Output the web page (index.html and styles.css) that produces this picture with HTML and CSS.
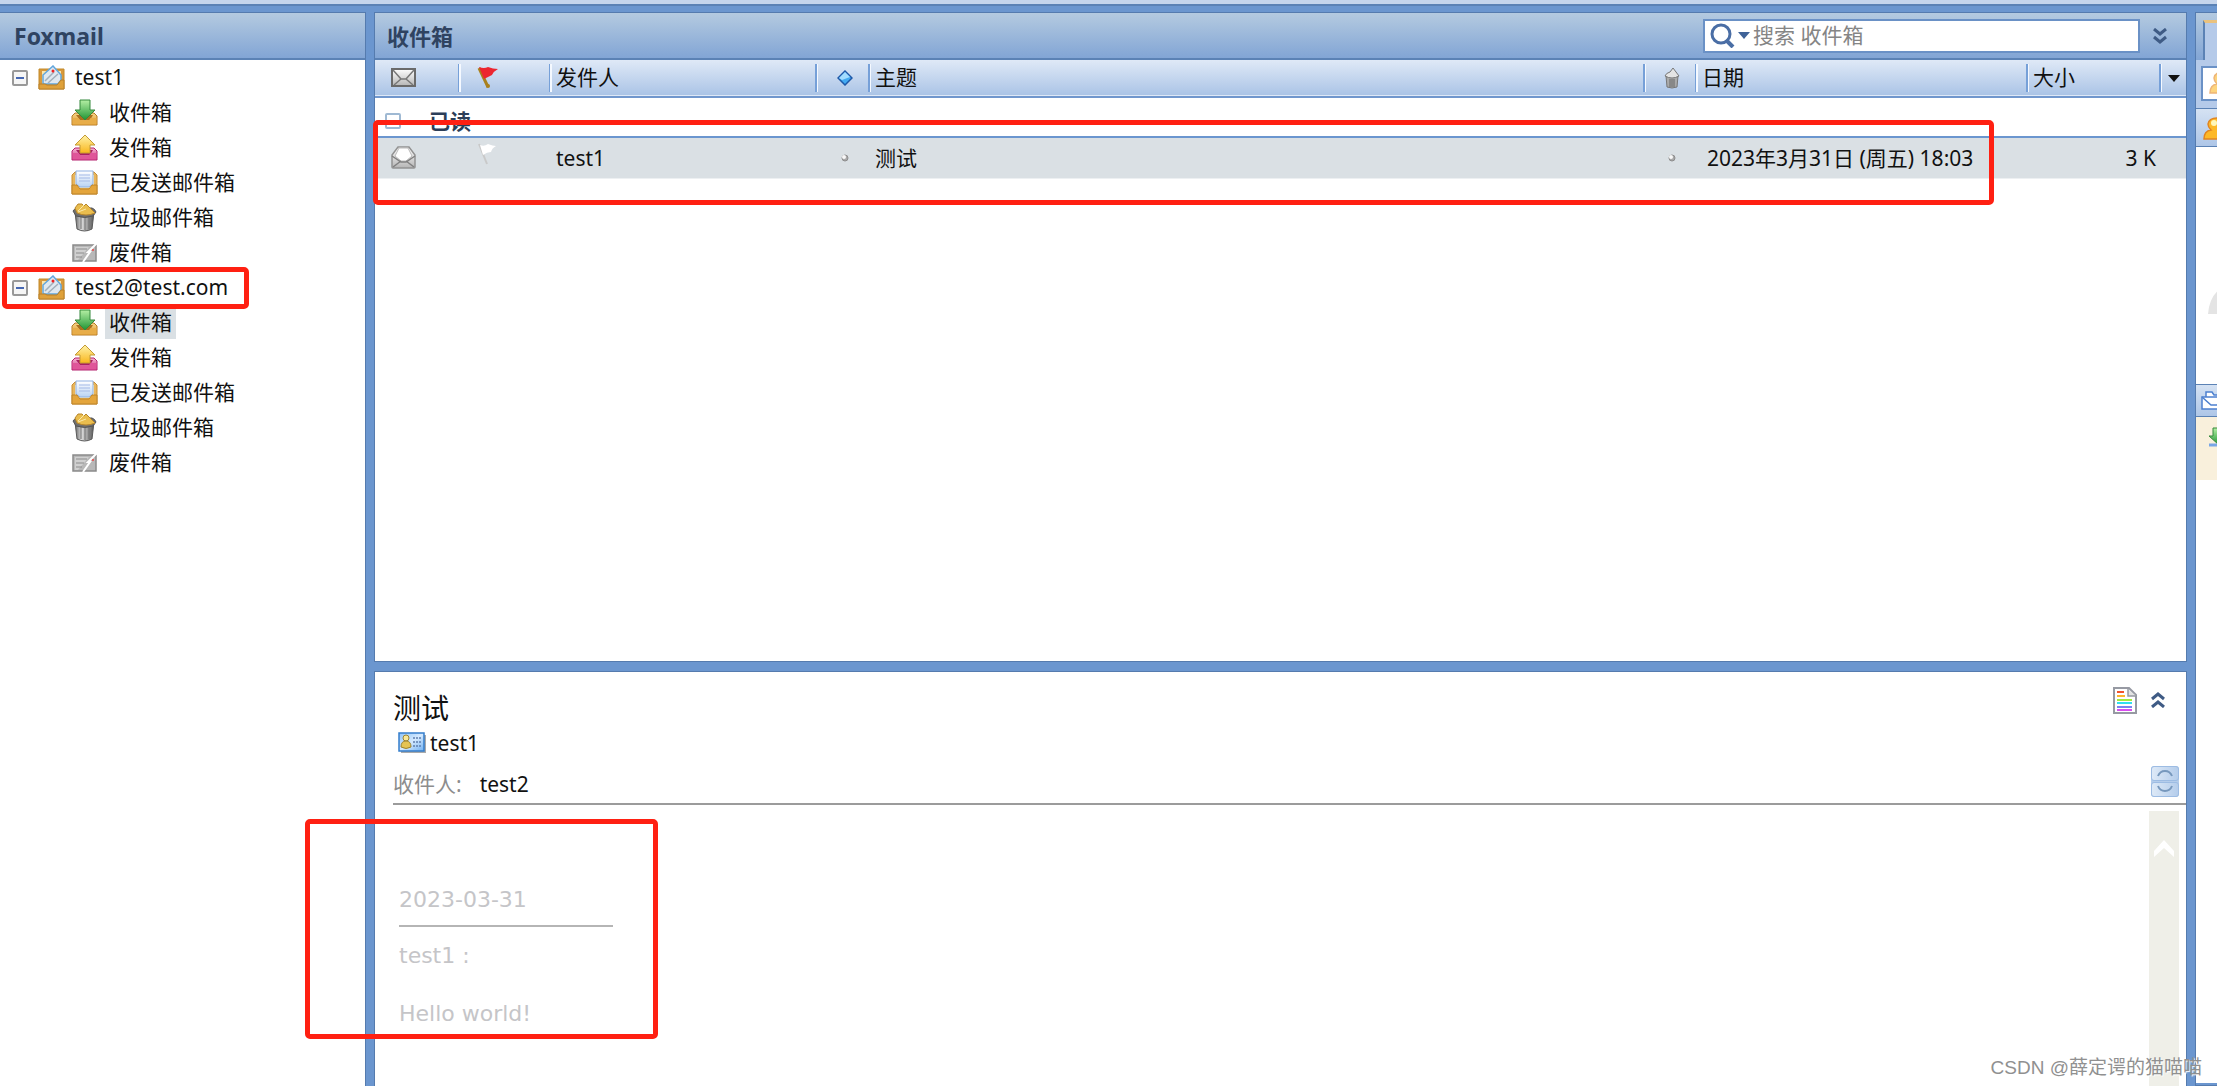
FILE: index.html
```html
<!DOCTYPE html>
<html lang="zh">
<head>
    <meta charset="UTF-8">
    <meta name="viewport" content="width=device-width, initial-scale=1.0">
    <title>Foxmail</title>
    <link rel="stylesheet" href="styles.css">
</head>
<body>
    <!-- 图标 -->
    <svg class="sprite" aria-hidden="true">
        <defs>
            <linearGradient id="gold" x1="0" y1="0" x2="0" y2="1"><stop offset="0" stop-color="#f7d589"/><stop offset="1" stop-color="#d9952c"/></linearGradient>
            <linearGradient id="green" x1="0" y1="0" x2="0" y2="1"><stop offset="0" stop-color="#b4efa4"/><stop offset="1" stop-color="#1f9433"/></linearGradient>
            <linearGradient id="pink" x1="0" y1="0" x2="0" y2="1"><stop offset="0" stop-color="#f9b7d4"/><stop offset="1" stop-color="#c62b7a"/></linearGradient>
            <linearGradient id="yellow" x1="0" y1="0" x2="0" y2="1"><stop offset="0" stop-color="#fff3a8"/><stop offset="1" stop-color="#f9b61d"/></linearGradient>
            <linearGradient id="gray" x1="0" y1="0" x2="1" y2="0"><stop offset="0" stop-color="#666"/><stop offset=".35" stop-color="#dcdcdc"/><stop offset="1" stop-color="#555"/></linearGradient>
            <linearGradient id="paper" x1="0" y1="0" x2="0" y2="1"><stop offset="0" stop-color="#fff"/><stop offset="1" stop-color="#b9d3f4"/></linearGradient>
            <linearGradient id="silver" x1="0" y1="0" x2="0" y2="1"><stop offset="0" stop-color="#fff"/><stop offset="1" stop-color="#b5b5b5"/></linearGradient>
            <linearGradient id="card" x1="0" y1="0" x2="1" y2="1"><stop offset="0" stop-color="#8ec3f8"/><stop offset=".5" stop-color="#d5eaff"/><stop offset="1" stop-color="#6fb0f2"/></linearGradient>
        </defs>
        <symbol id="i-minus" viewBox="0 0 16 16">
            <rect x="1" y="1" width="14" height="14" rx="1" fill="#f6f6f6" stroke="#999" stroke-width="2"/>
            <path d="M4 8h8" stroke="#4668b4" stroke-width="2"/>
        </symbol>
        <symbol id="i-minus-blue" viewBox="0 0 16 16">
            <rect x="1" y="1" width="14" height="14" rx="1" fill="#fff" stroke="#9fb9d3" stroke-width="2"/>
            <path d="M4 8h8" stroke="#8494a8" stroke-width="2"/>
        </symbol>
        <symbol id="i-account" viewBox="0 0 27 26">
            <path d="M1 4h25v20H1z" fill="#d9993b" stroke="#c28a2a"/>
            <path d="M4 6h19v13H4z" fill="#fbe5ac"/>
            <path d="M5 19V10L15 1l8 9v5l-3 4z" fill="#dfe8f0" stroke="#62a6dc" stroke-width="1.5"/>
            <path d="M7 16 16 7M10 18l10-9" stroke="#a3afba" stroke-width="1.5"/>
            <circle cx="15" cy="6" r="1.5" fill="#e22"/>
            <path d="M1 19h6l2 1h10l4-5h3v9H1z" fill="#dfa13a" stroke="#b9802a"/>
        </symbol>
        <symbol id="i-inbox" viewBox="0 0 27 27">
            <path d="M1 17l3-3h19l3 3v9H1z" fill="url(#gold)" stroke="#b67a24"/>
            <path d="M5 16h17l-3 5H9z" fill="#a8701e"/>
            <path d="M1.500 19h6l2 3h8l2-3h6v6.500h-24z" fill="#e8ad49"/>
            <path d="M9 1h10v10h5L14 21 4 11h5z" fill="url(#green)" stroke="#35893c"/>
        </symbol>
        <symbol id="i-outbox" viewBox="0 0 27 27">
            <path d="M1 17l3-3h19l3 3v9H1z" fill="url(#pink)" stroke="#b3226e"/>
            <path d="M5 16h17l-3 5H9z" fill="#a81f63"/>
            <path d="M1.500 19h6l2 3h8l2-3h6v6.500h-24z" fill="#df5699"/>
            <path d="M14 1l10 10h-5v8H9v-8H4z" fill="url(#yellow)" stroke="#c49a35"/>
        </symbol>
        <symbol id="i-sent" viewBox="0 0 27 26">
            <path d="M1 5l3-3h19l3 3v19H1z" fill="#e9b65c" stroke="#c98f35"/>
            <path d="M4 5h19v13H4z" fill="#fff0c6"/>
            <path d="M5 1h17v13l-4 3H9l-4-3z" fill="url(#paper)" stroke="#8fb0e2"/>
            <path d="M8 5h11M8 8h11M8 11h11" stroke="#a3b9e6"/>
            <path d="M1 15h5l3 4h9l3-4h5v9H1z" fill="#e4a53c" stroke="#bd842a"/>
        </symbol>
        <symbol id="i-trash" viewBox="0 0 27 29">
            <path d="M4 9h19l-2 17q-7.500 4-15 0z" fill="url(#gray)" stroke="#5a5a5a"/>
            <path d="M10 13v13M14 13v14M18 13v13" stroke="#707070"/>
            <path d="M2 8q1-2 4-3h15q3 1 4 4l-3 4q-8 3-17 0z" fill="#6f6f6f" stroke="#555"/>
            <path d="M4 5l3-4h4l2 2 2-2 9 9q-9 4-18 0z" fill="#e9bd4e" stroke="#b8862b"/>
            <path d="M7 8l6-6M7 9l8-3" stroke="#fbe9a9" stroke-width="1"/>
        </symbol>
        <symbol id="i-spam" viewBox="0 0 27 20">
            <path d="M2 2h23v16H2z" fill="#b8b8b8" stroke="#8a8a8a" stroke-width="1.500"/>
            <path d="M4 4h14L7 17H4z" fill="#d0d0d0"/>
            <path d="M5 6h11M5 10h8M5 14h6" stroke="#8c8c8c"/>
            <path d="M26 0l-9 9h2l-7 10" fill="none" stroke="#fff" stroke-width="2"/>
            <circle cx="22" cy="7" r="1" fill="#e44"/>
        </symbol>
        <symbol id="i-mail" viewBox="0 0 25 19">
            <path d="M1 1h23v17H1z" fill="url(#silver)" stroke="#6a6a6a" stroke-width="2"/>
            <path d="M2 2l8 9h5l8-9M3 17l7-6M22 17l-7-6" fill="none" stroke="#777" stroke-width="1.500"/>
        </symbol>
        <symbol id="i-opened" viewBox="0 0 25 23">
            <path d="M1 21V9l6-8h11l6 8v12q0 1-1 1H2q-1 0-1-1z" fill="url(#silver)" stroke="#929292" stroke-width="1.500"/>
            <path d="M4 10l4-8h9l4 8-6 5h-5z" fill="#fff" stroke="#bbb"/>
            <path d="M1 10l9 6h5l9-6M2 21l8-6M23 21l-8-6" fill="none" stroke="#808080" stroke-width="1.500"/>
        </symbol>
        <symbol id="i-flag" viewBox="0 0 22 23">
            <path d="M2 2l9 19" stroke="#a9801c" stroke-width="3"/>
            <circle cx="11" cy="20" r="2" fill="#a9801c"/>
            <path d="M2 1q5 2 9 0 5 2 10 2-4 2-6 6-4 2-8 4z" fill="#ec2630"/>
        </symbol>
        <symbol id="i-flag-off" viewBox="0 0 22 23">
            <path d="M2 1l8 20" stroke="#c9c9c9" stroke-width="2"/>
            <path d="M3 2q4 2 8-1 5 2 8 2-4 2-5 6-4 0-8 3z" fill="#fff"/>
        </symbol>
        <symbol id="i-diamond" viewBox="0 0 16 16">
            <path d="M8 1l7 7-7 7-7-7z" fill="#43aaf2" stroke="#1e58a8" stroke-width="1.500"/>
            <path d="M8 2l5 5-8 3-3-2z" fill="#a2dcff"/>
        </symbol>
        <symbol id="i-dot" viewBox="0 0 8 8">
            <circle cx="4" cy="4" r="3" fill="#a9a9a9" stroke="#8d8d8d"/>
            <circle cx="3" cy="3" r="2" fill="#f8f8f8"/>
        </symbol>
        <symbol id="i-bin" viewBox="0 0 16 22">
            <path d="M2 9h12l-1 11q-5 2-10 0z" fill="#aaa" stroke="#777"/>
            <path d="M6 12v8M8 12v8M10 12v8" stroke="#666"/>
            <path d="M1 9q1-3 5-4l3-4 3 4 3 4q-7 4-14 0z" fill="#e4e4e4" stroke="#777"/>
        </symbol>
        <symbol id="i-search" viewBox="0 0 25 25">
            <circle cx="11" cy="11" r="9" fill="none" stroke="#4a6ea5" stroke-width="3"/>
            <path d="M16 17l7 7" stroke="#4a6ea5" stroke-width="4"/>
        </symbol>
        <symbol id="i-caret" viewBox="0 0 12 7"><path d="M0 0h12L6 7z" fill="currentColor"/></symbol>
        <symbol id="i-chevrons" viewBox="0 0 14 16">
            <path d="M1 1l6 5 6-5M1 9l6 5 6-5" fill="none" stroke="#3f5b85" stroke-width="3"/>
        </symbol>
        <symbol id="i-card" viewBox="0 0 28 21">
            <path d="M3 20h24V3" fill="none" stroke="#aaa" stroke-width="2"/>
            <path d="M1 1h25v18H1z" fill="url(#card)" stroke="#347ecb" stroke-width="1.500"/>
            <circle cx="8" cy="6" r="3" fill="#f8e797" stroke="#9d8430"/>
            <path d="M3 15q0-6 5-6t5 6q-5 3-10 0z" fill="#e5c454" stroke="#9d8430"/>
            <path d="M15 6h9M15 10h9M15 14h9" stroke="#5f7fae" stroke-width="1.500" stroke-dasharray="2 1"/>
        </symbol>
        <symbol id="i-doc" viewBox="0 0 24 27">
            <path d="M1 1h15l7 7v18H1z" fill="#fff" stroke="#979aa3" stroke-width="2"/>
            <path d="M15 2v7h8" fill="#e2e2e2" stroke="#979aa3" stroke-width="1.500"/>
            <g stroke-width="2"><path d="M4 5h7" stroke="#f2532d"/><path d="M4 9h8" stroke="#ffb52e"/><path d="M4 13h15" stroke="#a4ea3c"/><path d="M4 16h15" stroke="#31dff0"/><path d="M4 20h15" stroke="#7a83f0"/><path d="M4 23h15" stroke="#d94df0"/></g>
        </symbol>
        <symbol id="i-person" viewBox="0 0 28 24">
            <path d="M1 22q0-8 7-9-3-3-3-6 1-6 9-6t9 6q0 3-3 6 7 1 7 9z" fill="#fdb827" stroke="#e18420" stroke-width="1.500"/>
            <circle cx="11" cy="6" r="3" fill="#fff7b8"/>
        </symbol>
        <symbol id="i-mails" viewBox="0 0 30 20">
            <path d="M5 6V1h6l2 3h16v14" fill="#fff" stroke="#4d80cf" stroke-width="1.500"/>
            <path d="M1 6h24v12H1z" fill="#fff" stroke="#4d80cf" stroke-width="1.500"/>
            <path d="M1 6l9 8h6l9-8" fill="none" stroke="#4d80cf" stroke-width="1.500"/>
        </symbol>
    </svg>

    <div class="toolbar-edge"></div>
    <main class="workspace">
        <nav class="pane folders">
            <h1 class="pane-header">Foxmail</h1>
            <ul class="tree">
                <li>
                    <div class="account">
                        <button class="toggle" aria-label="折叠 test1"><svg width="16" height="16"><use href="#i-minus"/></svg></button>
                        <a href="#test1"><svg width="27" height="26"><use href="#i-account"/></svg><span>test1</span></a>
                    </div>
                    <ul class="boxes">
                        <li><a href="#inbox1"><svg width="27" height="27"><use href="#i-inbox"/></svg><span>收件箱</span></a></li>
                        <li><a href="#outbox1"><svg width="27" height="27"><use href="#i-outbox"/></svg><span>发件箱</span></a></li>
                        <li><a href="#sent1"><svg width="27" height="26"><use href="#i-sent"/></svg><span>已发送邮件箱</span></a></li>
                        <li><a href="#trash1"><svg width="27" height="29"><use href="#i-trash"/></svg><span>垃圾邮件箱</span></a></li>
                        <li><a href="#spam1"><svg width="27" height="20"><use href="#i-spam"/></svg><span>废件箱</span></a></li>
                    </ul>
                </li>
                <li>
                    <div class="account">
                        <button class="toggle" aria-label="折叠 test2"><svg width="16" height="16"><use href="#i-minus"/></svg></button>
                        <a href="#test2"><svg width="27" height="26"><use href="#i-account"/></svg><span>test2@test.com</span></a>
                    </div>
                    <ul class="boxes">
                        <li><a href="#inbox2" class="selected"><svg width="27" height="27"><use href="#i-inbox"/></svg><span>收件箱</span></a></li>
                        <li><a href="#outbox2"><svg width="27" height="27"><use href="#i-outbox"/></svg><span>发件箱</span></a></li>
                        <li><a href="#sent2"><svg width="27" height="26"><use href="#i-sent"/></svg><span>已发送邮件箱</span></a></li>
                        <li><a href="#trash2"><svg width="27" height="29"><use href="#i-trash"/></svg><span>垃圾邮件箱</span></a></li>
                        <li><a href="#spam2"><svg width="27" height="20"><use href="#i-spam"/></svg><span>废件箱</span></a></li>
                    </ul>
                </li>
            </ul>
        </nav>

        <div class="mail">
            <section class="pane list">
                <div class="pane-header list-header">
                    <h2>收件箱</h2>
                    <label class="search">
                        <svg width="25" height="25"><use href="#i-search"/></svg>
                        <svg class="search-caret" width="12" height="7"><use href="#i-caret"/></svg>
                        <input type="text" placeholder="搜索 收件箱" aria-label="搜索 收件箱">
                    </label>
                    <button class="more" aria-label="更多"><svg width="14" height="16"><use href="#i-chevrons"/></svg></button>
                </div>
                <table class="messages">
                    <colgroup>
                        <col class="col-status"><col class="col-flag"><col class="col-from"><col class="col-mark"><col>
                        <col class="col-bin"><col class="col-date"><col class="col-size"><col class="col-menu">
                    </colgroup>
                    <thead>
                        <tr>
                            <th class="pad"><svg width="25" height="19"><use href="#i-mail"/></svg></th>
                            <th class="pad"><svg width="22" height="23"><use href="#i-flag"/></svg></th>
                            <th>发件人</th>
                            <th class="center"><svg width="16" height="16"><use href="#i-diamond"/></svg></th>
                            <th>主题</th>
                            <th class="center"><svg width="16" height="22"><use href="#i-bin"/></svg></th>
                            <th>日期</th>
                            <th>大小</th>
                            <th class="center"><button aria-label="列"><svg width="12" height="7"><use href="#i-caret"/></svg></button></th>
                        </tr>
                    </thead>
                    <tbody>
                        <tr class="group">
                            <td colspan="9"><div><button class="toggle" aria-label="折叠 已读"><svg width="16" height="16"><use href="#i-minus-blue"/></svg></button>已读</div></td>
                        </tr>
                        <tr class="message">
                            <td class="pad"><svg width="25" height="23"><use href="#i-opened"/></svg></td>
                            <td class="pad"><svg class="flag-off" width="22" height="23"><use href="#i-flag-off"/></svg></td>
                            <td>test1</td>
                            <td class="center"><svg width="8" height="8"><use href="#i-dot"/></svg></td>
                            <td>测试</td>
                            <td class="center"><svg width="8" height="8"><use href="#i-dot"/></svg></td>
                            <td class="date">2023年3月31日 (周五) 18:03</td>
                            <td class="size">3 K</td>
                            <td></td>
                        </tr>
                    </tbody>
                </table>
            </section>

            <article class="pane preview">
                <header class="preview-header">
                    <div class="preview-info">
                        <h2>测试</h2>
                        <div class="sender"><svg width="28" height="21"><use href="#i-card"/></svg>test1</div>
                        <div class="receiver"><span>收件人:</span>test2</div>
                    </div>
                    <div class="preview-tools">
                        <div class="tool-row">
                            <button aria-label="信纸"><svg width="24" height="27"><use href="#i-doc"/></svg></button>
                            <button class="up" aria-label="收起"><svg width="14" height="16"><use href="#i-chevrons"/></svg></button>
                        </div>
                        <div class="stepper">
                            <button aria-label="上一封"><svg width="16" height="8" viewBox="0 0 16 8"><path d="M1 7q2-5 7-5t7 5" fill="none" stroke="#7798bd" stroke-width="2"/></svg></button>
                            <button aria-label="下一封"><svg width="16" height="8" viewBox="0 0 16 8"><path d="M1 1q2 5 7 5t7-5" fill="none" stroke="#7798bd" stroke-width="2"/></svg></button>
                        </div>
                    </div>
                </header>
                <div class="preview-body">
                    <div class="content">
                        <p>2023-03-31</p>
                        <hr>
                        <p>test1 :</p>
                        <p class="text">Hello world!</p>
                    </div>
                    <div class="scrollbar"><svg width="20" height="17" viewBox="0 0 20 17"><path d="M0 11L10 0l10 11v6L10 8 0 17z" fill="#fff"/></svg></div>
                </div>
            </article>
        </div>

        <aside class="pane contacts">
            <div class="pane-header"><div class="tab"></div></div>
            <div class="contact-search"><div><svg width="28" height="24"><use href="#i-person"/></svg></div></div>
            <div class="contact-bar"><svg width="28" height="24"><use href="#i-person"/></svg></div>
            <div class="avatar"><svg width="60" height="32" viewBox="0 0 60 32"><path d="M0 32Q2 4 30 0q28 4 30 32z" fill="#e4e4e4"/></svg></div>
            <div class="contact-bar mails"><svg width="30" height="20"><use href="#i-mails"/></svg></div>
            <div class="recent"><svg width="24" height="20" viewBox="0 0 24 20"><path d="M1 18h22" stroke="#78a6e6" stroke-width="3"/><path d="M5 1h11v8h5L11 18 1 9h4z" fill="url(#green)" stroke="#35893c"/></svg></div>
            <div class="contact-rest"></div>
        </aside>
    </main>

    <!-- 标注框 -->
    <div class="highlight highlight-account"></div>
    <div class="highlight highlight-message"></div>
    <div class="highlight highlight-content"></div>
    <div class="watermark">CSDN @薛定谔的猫喵喵</div>
</body>
</html>
```
FILE: styles.css
```css
* {
    box-sizing: border-box;
}

body {
    margin: 0;
    height: 100vh;
    display: flex;
    flex-direction: column;
    overflow: hidden;
    position: relative;
    background: #6b96cf;
    color: #111;
    font-family: "Noto Sans", "Noto Sans CJK SC", sans-serif;
    font-size: 21px;
    line-height: 30px;
}

h1, h2, p, ul {
    margin: 0;
    padding: 0;
}

ul {
    list-style: none;
}

a {
    color: inherit;
    text-decoration: none;
}

button {
    display: block;
    padding: 0;
    border: none;
    background: none;
    color: inherit;
    cursor: pointer;
}

svg {
    display: block;
    flex-shrink: 0;
}

.sprite {
    position: absolute;
    width: 0;
    height: 0;
}

.toolbar-edge {
    height: 6px;
    background: #c5d5ec;
    border-bottom: 2px solid #5b82b5;
}

/* 三栏布局 */
.workspace {
    flex: 1;
    min-height: 0;
    display: grid;
    grid-template-columns: 366px minmax(0, 1fr) 22px;
    gap: 8px;
    padding-top: 6px;
}

.pane {
    background: #fff;
    border: 1px solid #557bae;
    overflow: hidden;
}

.pane-header {
    height: 47px;
    display: flex;
    align-items: center;
    padding-left: 14px;
    background: linear-gradient(#b4cae0, #82a5d5);
    border-bottom: 2px solid #5b82b5;
    color: #2f4361;
    font-size: 23px;
    font-weight: bold;
}

.folders {
    border-left: none;
    border-bottom: none;
}

/* 文件夹树 */
.account, .boxes li {
    height: 35px;
    display: flex;
    align-items: center;
}

.account {
    padding-left: 12px;
    gap: 10px;
}

.account a, .boxes a {
    display: flex;
    align-items: center;
}

.account a {
    gap: 10px;
}

.account span {
    padding-bottom: 2px;
}

.boxes {
    padding-left: 71px;
}

.boxes a {
    gap: 7px;
}

.boxes span {
    padding: 0 4px 2px;
}

.boxes .selected span {
    background: #dae0e4;
}

.mail {
    min-height: 0;
    display: grid;
    grid-template-rows: 649fr 415fr;
    gap: 9px;
}

.list-header {
    padding-left: 12px;
}

.list-header h2 {
    flex: 1;
    font-size: 22px;
}

.search {
    width: 437px;
    height: 34px;
    display: flex;
    align-items: center;
    padding-left: 5px;
    background: #fff;
    border: 2px solid #6a91c6;
}

.search-caret {
    margin: 0 3px;
    color: #3f6398;
}

.search input {
    flex: 1;
    min-width: 0;
    height: 30px;
    padding: 0 0 2px;
    border: none;
    outline: none;
    background: none;
    font: inherit;
    font-size: 21px;
    font-weight: normal;
}

.search input::placeholder {
    color: #858585;
}

.more {
    margin: 0 19px 0 13px;
}

/* 邮件列表 */
.messages {
    width: 100%;
    table-layout: fixed;
    border-collapse: collapse;
}

.col-status { width: 86px; }
.col-flag { width: 91px; }
.col-from { width: 266px; }
.col-mark { width: 53px; }
.col-bin { width: 52px; }
.col-date { width: 331px; }
.col-size { width: 133px; }
.col-menu { width: 24px; }

.messages th, .messages td {
    padding: 0 0 0 4px;
    text-align: left;
    font-weight: normal;
    white-space: nowrap;
}

.messages thead tr {
    height: 37px;
    background: linear-gradient(#dfe9f7, #abc4e6);
    border-bottom: 2px solid #7197cd;
}

.messages th {
    padding-bottom: 2px;
    background: linear-gradient(90deg, #76a0d8 50%, #f5f9ff 50%) right center / 3px 28px no-repeat;
}

.messages th:last-child {
    background: none;
}

.messages .pad {
    padding-left: 16px;
}

.messages .center {
    padding: 0;
}

.messages .center > * {
    margin: 0 auto;
}

.group td {
    height: 39px;
    border-bottom: 2px solid #6b96cf;
}

.group div {
    display: flex;
    align-items: center;
    gap: 28px;
    padding: 8px 0 0 6px;
    color: #2c3e58;
    font-weight: bold;
}

.message {
    height: 41px;
    background: #dae0e4;
    border-bottom: 1px solid #edf0f2;
}

.flag-off {
    margin-bottom: 6px;
}

.messages .date {
    padding-left: 9px;
}

.messages .size {
    padding-right: 6px;
    text-align: right;
}

/* 邮件预览 */
.preview {
    display: flex;
    flex-direction: column;
    border-bottom: none;
}

.preview-header {
    display: flex;
    justify-content: space-between;
    margin-left: 18px;
    padding-top: 15px;
    border-bottom: 2px solid #9b9b9b;
}

.preview-info h2 {
    font-size: 28px;
    font-weight: normal;
    line-height: 42px;
}

.sender {
    display: flex;
    align-items: center;
    gap: 4px;
    padding-left: 5px;
    line-height: 28px;
}

.receiver {
    padding: 12px 0 4px;
}

.receiver span {
    margin-right: 18px;
    color: #8d8d8d;
}

.preview-tools {
    display: flex;
    flex-direction: column;
    justify-content: space-between;
    align-items: flex-end;
    padding-right: 7px;
    padding-bottom: 6px;
}

.tool-row {
    display: flex;
    align-items: center;
    gap: 14px;
    padding-right: 14px;
}

.up {
    transform: rotate(180deg);
}

.stepper {
    display: grid;
    gap: 1px;
    background: #b5cdeb;
    border-radius: 3px;
}

.stepper button {
    width: 28px;
    height: 15px;
    display: grid;
    place-items: center;
    border: 1px solid #9dbce3;
    border-radius: 3px;
    background: linear-gradient(90deg, #dde9f7, #b5cdeb);
}

.preview-body {
    flex: 1;
    display: flex;
    justify-content: space-between;
    padding: 6px 7px 0 24px;
}

.content {
    padding-top: 74px;
    color: #c5c5c8;
    font-family: "DejaVu Sans", "Noto Sans CJK SC", sans-serif;
    font-size: 22px;
}

.content hr {
    width: 214px;
    height: 2px;
    margin: 10px 0 14px;
    border: none;
    background: #b5b5b5;
}

.content .text {
    margin-top: 28px;
}

.scrollbar {
    width: 30px;
    display: flex;
    justify-content: center;
    padding-top: 29px;
    background: #efefe8;
}

/* 右侧联系人栏 */
.contacts {
    display: flex;
    flex-direction: column;
    border-right: none;
}

.contacts .pane-header {
    align-items: flex-end;
    padding-left: 7px;
    border-bottom: none;
}

.tab {
    width: 100%;
    height: 40px;
    background: #b5cae9;
    border-top: 3px solid #eac27e;
    border-left: 2px solid #5b82b5;
}

.contact-search {
    height: 48px;
    padding: 6px 0 6px 5px;
    background: #b5cae9;
}

.contact-search div {
    height: 35px;
    padding: 3px 0 0 6px;
    background: #fff;
    border: 2px solid #6a91c6;
    border-right: none;
}

.contact-search svg {
    opacity: 0.6;
}

.contact-bar {
    height: 39px;
    padding: 8px 0 0 7px;
    background: linear-gradient(#d5e2f3, #aec6e7);
    border-top: 1px solid #5b82b5;
    border-bottom: 1px solid #5b82b5;
}

.avatar {
    height: 237px;
    padding: 135px 0 0 12px;
}

.mails {
    height: 33px;
    padding: 6px 0 0 5px;
}

.recent {
    height: 63px;
    padding: 10px 0 0 12px;
    background: #f9f0dc;
}

.contact-rest {
    flex: 1;
    border-bottom: 2px solid #6b96cf;
}

/* 红色标注框 */
.highlight {
    position: absolute;
    border: 5px solid #ff2012;
    border-radius: 5px;
    pointer-events: none;
}

.highlight-account {
    top: 267px;
    left: 2px;
    width: 247px;
    height: 42px;
}

.highlight-message {
    top: 120px;
    left: 373px;
    width: 1621px;
    height: 85px;
}

.highlight-content {
    top: 819px;
    left: 305px;
    width: 353px;
    height: 220px;
}

.watermark {
    position: absolute;
    right: 15px;
    bottom: 3px;
    color: #909090;
    font-family: "Liberation Sans", "Noto Sans CJK SC", sans-serif;
    font-size: 19px;
    text-shadow: 1px 1px 1px #fff;
}
```
